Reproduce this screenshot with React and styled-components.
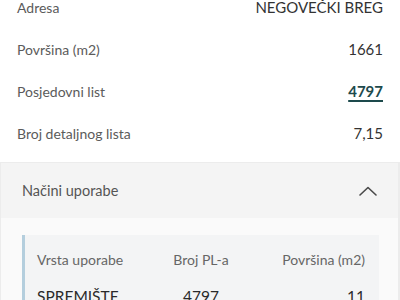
import React from "react";
import styled, { createGlobalStyle } from "styled-components";

const Global = createGlobalStyle`
  html, body {
    margin: 0;
    padding: 0;
    background: #ffffff;
    overflow: hidden;
  }
  body {
    font-family: "Lato", "Open Sans", sans-serif;
  }
`;

const Page = styled.div`
  width: 400px;
  margin-top: -14px;
`;

const Details = styled.div`
  padding: 0 17px;
`;

const Row = styled.div`
  display: flex;
  justify-content: space-between;
  align-items: center;
  height: 42px;
`;

const Label = styled.span`
  font-size: 14px;
  color: #5b5b5b;
`;

const Value = styled.span`
  font-size: 15px;
  color: #333333;
`;

const Link = styled.a`
  font-size: 15px;
  font-weight: 700;
  color: #1d4a4c;
  text-decoration: underline;
  text-underline-offset: 3px;
  text-decoration-thickness: 2px;
`;

const Panel = styled.section`
  margin-top: 8px;
  border: 1px solid #ececec;
  border-right-width: 2px;
  background: #fafafa;
`;

const PanelHeader = styled.div`
  display: flex;
  align-items: center;
  justify-content: space-between;
  height: 55px;
  padding: 0 21px 0 21px;
  background: #f4f4f4;
`;

const PanelTitle = styled.span`
  font-size: 14.5px;
  color: #555555;
`;

const PanelBody = styled.div`
  padding: 17px 19px 20px 21px;
`;

const Table = styled.div`
  background: #f3f4f5;
  border-left: 3px solid #b4cedd;
  padding: 0 14px 0 12px;
`;

const TableRow = styled.div`
  display: grid;
  grid-template-columns: 1fr 1fr 1fr;
  align-items: center;
  height: ${({ $head }) => ($head ? "48px" : "26px")};
`;

const Cell = styled.span`
  font-size: ${({ $head }) => ($head ? "14px" : "15.5px")};
  color: ${({ $head }) => ($head ? "#666666" : "#2a2a2a")};
  text-align: ${({ $align }) => $align || "left"};
  white-space: nowrap;
`;

const Chevron = () => (
  <svg width="18" height="10" viewBox="0 0 18 10" fill="none">
    <polyline
      points="1,9 9,1.5 17,9"
      stroke="#4a4a4a"
      strokeWidth="1.6"
      strokeLinecap="round"
      strokeLinejoin="round"
    />
  </svg>
);

const rows = [
  ["Adresa", "NEGOVEČKI BREG"],
  ["Površina (m2)", "1661"],
  ["Posjedovni list", "4797", true],
  ["Broj detaljnog lista", "7,15"],
];

export default function App() {
  return (
    <Page>
      <Global />
      <Details>
        {rows.map(([label, value, link]) => (
          <Row key={label}>
            <Label>{label}</Label>
            {link ? <Link href="#">{value}</Link> : <Value>{value}</Value>}
          </Row>
        ))}
      </Details>
      <Panel>
        <PanelHeader>
          <PanelTitle>Načini uporabe</PanelTitle>
          <Chevron />
        </PanelHeader>
        <PanelBody>
          <Table>
            <TableRow $head>
              <Cell $head>Vrsta uporabe</Cell>
              <Cell $head $align="center">Broj PL-a</Cell>
              <Cell $head $align="right">Površina (m2)</Cell>
            </TableRow>
            <TableRow>
              <Cell>SPREMIŠTE</Cell>
              <Cell $align="center">4797</Cell>
              <Cell $align="right">11</Cell>
            </TableRow>
          </Table>
        </PanelBody>
      </Panel>
    </Page>
  );
}
